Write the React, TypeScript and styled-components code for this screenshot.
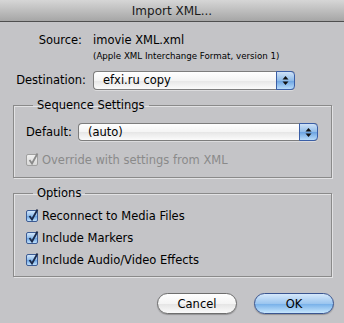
import styled, { createGlobalStyle } from 'styled-components';

const Global = createGlobalStyle`
  html, body { margin: 0; padding: 0; background: #c4c4c7; }
  body { font-family: "DejaVu Sans", "Liberation Sans", sans-serif; font-size: 11.5px; color: #000; }
`;

const Window = styled.div`
  width: 344px;
  height: 323px;
  background: #c4c4c7;
  display: flex;
  flex-direction: column;
  overflow: hidden;
`;

const TitleBar = styled.div`
  height: 21px;
  flex: none;
  border-bottom: 1px solid #4f4f4f;
  background: linear-gradient(#d6d6d6, #a6a6a6);
  display: flex;
  align-items: center;
  justify-content: center;
  font-size: 12px;
  color: #1a1a1a;
`;

const Body = styled.div`
  padding: 0 12px 0 13px;
  display: flex;
  flex-direction: column;
`;

const FormGrid = styled.div`
  display: grid;
  grid-template-columns: 73px 1fr;
  column-gap: 7px;
  align-items: center;
  margin-top: 11px;
  padding-right: 37px;
  line-height: 15px;
`;

const Label = styled.div<{ $shift?: number }>`
  text-align: right;
  padding-right: ${(p) => p.$shift ?? 0}px;
  white-space: nowrap;
`;

const Value = styled.div`
  white-space: nowrap;
`;

const Note = styled.div`
  grid-column: 2;
  font-size: 8.7px;
  line-height: 11px;
  margin-top: 3px;
  margin-bottom: 9px;
  white-space: nowrap;
`;

const Popup = styled.div<{ $height: number }>`
  height: ${(p) => p.$height}px;
  box-sizing: border-box;
  border: 1px solid #7d7d7d;
  border-right: none;
  border-radius: 4px;
  background: linear-gradient(#ffffff 0%, #f4f4f4 50%, #e6e6e6 51%, #fbfbfb 100%);
  display: flex;
  align-items: center;
  box-shadow: 0 1px 0 rgba(255,255,255,0.4);
`;

const PopupText = styled.span`
  flex: 1;
  padding-left: 9px;
  white-space: nowrap;
`;

const Stepper = styled.span`
  width: 17px;
  align-self: stretch;
  margin: -1px 0;
  border: 1px solid #3a5ea6;
  border-radius: 0 4px 4px 0;
  background: linear-gradient(#cfe2f7 0%, #8fbbe8 50%, #6aa2e0 51%, #b8dcfb 100%);
  display: flex;
  align-items: center;
  justify-content: center;
`;

const Group = styled.fieldset`
  margin: 0;
  padding: 0 0 0 12px;
  border: 1px solid #8a8a8a;
  box-shadow: 1px 1px 0 #e2e2e4, inset 1px 1px 0 #e2e2e4;
  display: flex;
  flex-direction: column;
`;

const Legend = styled.legend`
  margin-left: 7px;
  padding: 0 4px;
  line-height: 15px;
`;

const GroupRow = styled.div`
  display: flex;
  align-items: center;
  gap: 6px;
  margin-top: 10px;
  padding-right: 13px;
`;

const Checks = styled.div<{ $top: number; $bottom: number }>`
  margin-top: ${(p) => p.$top}px;
  margin-bottom: ${(p) => p.$bottom}px;
`;

const Check = styled.label<{ $disabled?: boolean }>`
  display: flex;
  align-items: center;
  gap: 4px;
  height: 22px;
  color: ${(p) => (p.$disabled ? '#8a8a8a' : '#000')};
  white-space: nowrap;
`;

const Box = styled.span<{ $disabled?: boolean }>`
  width: 12px;
  height: 12px;
  box-sizing: border-box;
  border: 1px solid ${(p) => (p.$disabled ? '#a0a0a0' : '#3c5b94')};
  border-radius: 2px;
  background: ${(p) =>
    p.$disabled
      ? 'linear-gradient(#f0f0f0, #d8d8d8)'
      : 'linear-gradient(#d2e6fb 0%, #8fbcea 50%, #6aa3e2 51%, #bfe0fb 100%)'};
  position: relative;
  flex: none;
`;

const Tick = styled.svg`
  position: absolute;
  left: 0px;
  top: -3px;
  overflow: visible;
`;

const Spacer = styled.div<{ $h: number }>`
  height: ${(p) => p.$h}px;
  flex: none;
`;

const Buttons = styled.div`
  display: flex;
  justify-content: flex-end;
  gap: 17px;
  margin-top: 16px;
  margin-right: -2px;
`;

const Button = styled.button<{ $primary?: boolean }>`
  width: 80px;
  height: 21px;
  border-radius: 11px;
  border: 1px solid ${(p) => (p.$primary ? '#3a5590' : '#6e6e6e')};
  font-family: inherit;
  font-size: 11.5px;
  color: #000;
  padding: 0;
  background: ${(p) =>
    p.$primary
      ? 'linear-gradient(#d5e8fb 0%, #9cc6ef 50%, #74aee8 51%, #c6e6fd 100%)'
      : 'linear-gradient(#ffffff 0%, #f4f4f4 50%, #e4e4e4 51%, #fafafa 100%)'};
  box-shadow: 0 1px 1px rgba(0,0,0,0.25);
`;

const Arrows = () => (
  <svg width="7" height="11" viewBox="0 0 7 11">
    <path d="M3.5 1 L6.5 4.5 H0.5 Z" fill="#111" />
    <path d="M3.5 10 L6.5 6.5 H0.5 Z" fill="#111" />
  </svg>
);

const CheckBox = ({ text, disabled }: { text: string; disabled?: boolean }) => (
  <Check $disabled={disabled}>
    <Box $disabled={disabled}>
      <Tick width="12" height="14" viewBox="0 0 12 14">
        <path
          d="M2.5 8 L5 11.5 L10.5 1.5"
          fill="none"
          stroke={disabled ? '#8a8a8a' : '#1b2a4a'}
          strokeWidth="1.8"
        />
      </Tick>
    </Box>
    {text}
  </Check>
);

export default function App() {
  return (
    <Window>
      <Global />
      <TitleBar>Import XML...</TitleBar>
      <Body>
        <FormGrid>
          <Label $shift={4}>Source:</Label>
          <Value>imovie XML.xml</Value>
          <Note>(Apple XML Interchange Format, version 1)</Note>
          <Label>Destination:</Label>
          <Popup $height={19}>
            <PopupText>efxi.ru copy</PopupText>
            <Stepper>
              <Arrows />
            </Stepper>
          </Popup>
        </FormGrid>

        <Spacer $h={8} />
        <Group>
          <Legend>Sequence Settings</Legend>
          <GroupRow>
            <span>Default:</span>
            <div style={{ flex: 1 }}>
              <Popup $height={18}>
                <PopupText>(auto)</PopupText>
                <Stepper>
                  <Arrows />
                </Stepper>
              </Popup>
            </div>
          </GroupRow>
          <Checks $top={8} $bottom={6}>
            <CheckBox text="Override with settings from XML" disabled />
          </Checks>
        </Group>

        <Spacer $h={8} />
        <Group>
          <Legend>Options</Legend>
          <Checks $top={4} $bottom={5}>
            <CheckBox text="Reconnect to Media Files" />
            <CheckBox text="Include Markers" />
            <CheckBox text="Include Audio/Video Effects" />
          </Checks>
        </Group>

        <Buttons>
          <Button>Cancel</Button>
          <Button $primary>OK</Button>
        </Buttons>
      </Body>
    </Window>
  );
}
